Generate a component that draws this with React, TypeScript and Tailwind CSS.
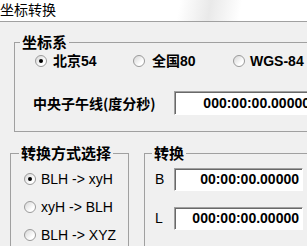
import React from "react";

const CJK = "font-['Noto_Sans_CJK_SC',sans-serif]";
const LAT = "font-['Liberation_Sans','Noto_Sans_CJK_SC',sans-serif]";

function Radio({ checked }: { checked?: boolean }) {
  return (
    <span className="inline-flex w-[12px] h-[12px] shrink-0 items-center justify-center rounded-full border border-[#9a9a9a] bg-[linear-gradient(135deg,#d6d6d6,#ffffff_70%)]">
      {checked && <span className="w-[4px] h-[4px] rounded-full bg-black" />}
    </span>
  );
}

function Field({ value, className }: { value: string; className: string }) {
  return (
    <div
      className={`${className} shrink-0 flex items-center justify-end pr-[3px] bg-white border-t border-l border-t-[#a0a0a0] border-l-[#a0a0a0] border-b border-r border-b-white border-r-white shadow-[inset_1px_1px_0_#696969] ${LAT} font-bold text-[14px] text-black whitespace-nowrap overflow-hidden`}
    >
      {value}
    </div>
  );
}

export default function App() {
  return (
    <div className={`w-[307px] h-[246px] overflow-hidden bg-[#f0f0f0] flex flex-col text-black ${CJK}`}>
      <div className="h-[22px] shrink-0 border-b border-[#a0a0a0] bg-[linear-gradient(100deg,#ffffff_58%,#e9e9e9_68%,#ffffff_78%)] text-[14px] leading-[16px] pt-[1px] whitespace-nowrap">
        坐标转换
      </div>

      <fieldset className="mt-[11px] ml-[14px] w-[316px] shrink-0 border border-[#a0a0a0] pb-[16px]">
        <legend className="ml-[5px] px-[2px] text-[15px] leading-[18px] font-bold">坐标系</legend>
        <div className="mt-[2px] h-[16px] flex items-center pl-[20px] text-[14px] font-bold whitespace-nowrap">
          <div className="w-[98px] flex items-center gap-[6px]">
            <Radio checked />
            <span>
              北京<span className={LAT}>54</span>
            </span>
          </div>
          <div className="w-[100px] flex items-center gap-[7px]">
            <Radio />
            <span>
              全国<span className={LAT}>80</span>
            </span>
          </div>
          <div className="flex items-center gap-[5px]">
            <Radio />
            <span className={LAT}>WGS-84</span>
          </div>
        </div>
        <div className="mt-[22px] flex items-center pl-[18px]">
          <div className="w-[141px] text-[14px] font-bold whitespace-nowrap">中央子午线(度分秒)</div>
          <Field value="000:00:00.00000" className="w-[140px] h-[24px]" />
        </div>
      </fieldset>

      <div className="mt-[12px] flex flex-1">
        <fieldset className="ml-[10px] w-[119px] shrink-0 border border-[#a0a0a0] h-[120px]">
          <legend className="ml-[8px] px-[2px] text-[15px] leading-[18px] font-bold">转换方式选择</legend>
          <div className={`mt-[9px] flex flex-col gap-[12px] pl-[13px] ${LAT} text-[14px]`}>
            <div className="h-[16px] flex items-center gap-[5px] whitespace-nowrap">
              <Radio checked />
              <span>BLH -&gt; xyH</span>
            </div>
            <div className="h-[16px] flex items-center gap-[5px] whitespace-nowrap">
              <Radio />
              <span>xyH -&gt; BLH</span>
            </div>
            <div className="h-[16px] flex items-center gap-[5px] whitespace-nowrap">
              <Radio />
              <span>BLH -&gt; XYZ</span>
            </div>
          </div>
        </fieldset>

        <fieldset className="ml-[15px] w-[170px] shrink-0 border border-[#a0a0a0] h-[120px]">
          <legend className="ml-[7px] px-[2px] text-[15px] leading-[18px] font-bold">转换</legend>
          <div className={`mt-[6px] flex flex-col gap-[16px] pl-[10px] ${LAT} text-[14px]`}>
            <div className="flex items-center">
              <span className="w-[19px]">B</span>
              <Field value="00:00:00.00000" className="w-[129px] h-[23px]" />
            </div>
            <div className="flex items-center">
              <span className="w-[19px]">L</span>
              <Field value="000:00:00.00000" className="w-[129px] h-[23px]" />
            </div>
          </div>
        </fieldset>
      </div>
    </div>
  );
}
